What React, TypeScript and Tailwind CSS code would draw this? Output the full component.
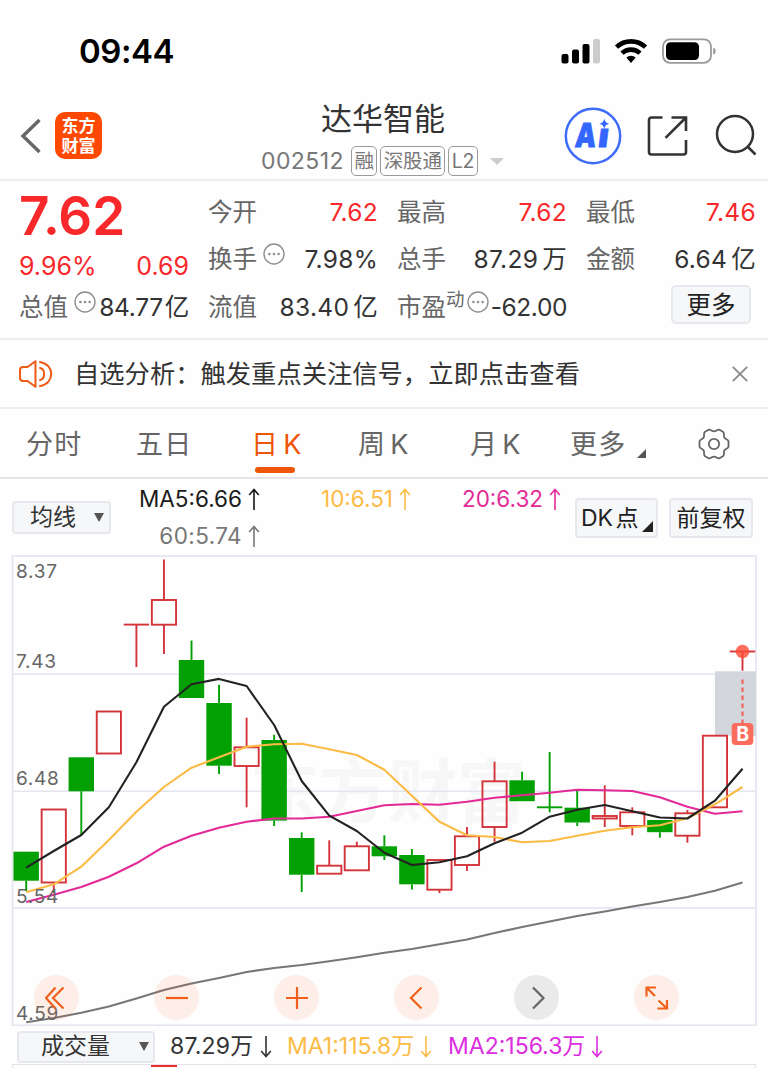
import type { ReactNode } from 'react'
import clsx from 'clsx'

type Candle = {
  up: boolean
  top: number
  bottom: number
  high?: number
  low?: number
}

const STEP = 27.55
const FIRST_X = 26.2

const candles: Candle[] = [
  { up: false, top: 851.7, bottom: 880.7, low: 891 },
  { up: true, top: 809.5, bottom: 882.5, low: 893 },
  { up: false, top: 757.3, bottom: 791.3, low: 835.3 },
  { up: true, top: 711.5, bottom: 753.5 },
  { up: true, top: 624.6, bottom: 624.6, low: 667 },
  { up: true, top: 600, bottom: 624.7, high: 559.5, low: 654 },
  { up: false, top: 660, bottom: 698, high: 640.5 },
  { up: false, top: 703, bottom: 765.7, high: 684.7, low: 774 },
  { up: true, top: 747.3, bottom: 766, high: 717.7, low: 807.3 },
  { up: false, top: 740, bottom: 820.6, high: 734.7, low: 826 },
  { up: false, top: 838, bottom: 874.7, high: 832.3, low: 892 },
  { up: true, top: 865.7, bottom: 873.7, high: 840.3 },
  { up: true, top: 846.3, bottom: 870.3, high: 841.7 },
  { up: false, top: 846.3, bottom: 856.3, high: 835.3, low: 860 },
  { up: false, top: 855, bottom: 884.3, high: 849, low: 889.5 },
  { up: true, top: 860, bottom: 889.7, low: 893 },
  { up: true, top: 836.3, bottom: 865, high: 827, low: 871 },
  { up: true, top: 781.3, bottom: 827, high: 761.7, low: 841.7 },
  { up: false, top: 780.3, bottom: 801.2, high: 771.7 },
  { up: false, top: 807.3, bottom: 807.3, high: 752, low: 812.3 },
  { up: false, top: 807.7, bottom: 822.5, high: 790.3, low: 826 },
  { up: true, top: 816, bottom: 818.5, high: 785.3, low: 827 },
  { up: true, top: 812.3, bottom: 826, high: 807.3, low: 835.3 },
  { up: false, top: 820, bottom: 832.2, low: 837.7 },
  { up: true, top: 813.3, bottom: 835.7, high: 810, low: 842.7 },
  { up: true, top: 735.7, bottom: 807.3 },
  { up: true, top: 651.5, bottom: 651.5, low: 670.7 },
]

const ma5 = [867.7, 851, 835, 807.3, 762.3, 706.7, 684.3, 678.9, 686, 725, 781, 815.7, 831, 852.7, 865, 862.3, 856.3, 843.3, 832.7, 816.7, 809.7, 805, 811.3, 817.5, 818.5, 800.7, 768.7]
const ma10 = [892.3, 884.3, 866.7, 840, 811.7, 787, 767.7, 757.3, 746.7, 744.3, 743.7, 749.3, 755, 769.7, 795.7, 821.7, 835.3, 837, 842.3, 841, 835.7, 830.7, 827.3, 825.3, 818.3, 804.3, 787]
const ma20 = [902, 894.7, 887, 876.7, 863.3, 846.7, 835.7, 827.7, 821.7, 818.5, 818.5, 816.7, 811, 805.3, 804, 804.7, 801.7, 797.7, 795.3, 792.7, 789.7, 790.3, 791, 797.3, 806.7, 813.7, 811.3]
const ma60 = [1022.3, 1018, 1012.7, 1006.5, 998.5, 990, 983.5, 978, 972, 968, 965, 961.2, 957.2, 952.8, 949, 944.2, 939.5, 933, 927, 921.5, 916, 911.5, 906.5, 902, 897, 890.7, 882.5]

const axis = [
  { value: '8.37', y: 578 },
  { value: '7.43', y: 667.5 },
  { value: '6.48', y: 785 },
  { value: '5.54', y: 902.5 },
  { value: '4.59', y: 1020 },
]

const xAt = (i: number) => FIRST_X + i * STEP

const toPoints = (values: number[]) => values.map((y, i) => `${xAt(i)},${y}`).join(' ')

function Arrow({ down }: { down?: boolean }) {
  return (
    <svg viewBox="0 0 12 23" className={clsx('h-[23px] w-3 shrink-0', down && 'rotate-180')} fill="none" stroke="currentColor" strokeWidth="1.6">
      <path d="M6 22V1.5M1.2 7 6 1.5 10.8 7" />
    </svg>
  )
}

function MoreDots() {
  return (
    <svg viewBox="0 0 22 22" className="h-[22px] w-[22px] shrink-0 text-[#8e8e8e]" fill="none" stroke="currentColor" strokeWidth="1.4">
      <circle cx="11" cy="11" r="10" />
      <g fill="currentColor" stroke="none">
        <circle cx="6.4" cy="11" r="1.3" />
        <circle cx="11" cy="11" r="1.3" />
        <circle cx="15.6" cy="11" r="1.3" />
      </g>
    </svg>
  )
}

function StatusBar() {
  return (
    <div className="flex h-[92px] items-center justify-between pt-[10px] pr-[52px] pl-[79px]">
      <span className="text-[33px] leading-none font-semibold tracking-[-0.5px] text-black">09:44</span>
      <svg viewBox="0 0 155 26" className="h-[26px] w-[155px]">
        <rect x="0.5" y="16" width="7" height="9.5" rx="2" />
        <rect x="11" y="11.5" width="7" height="14" rx="2" />
        <rect x="21.5" y="6" width="7" height="19.5" rx="2" />
        <rect x="32" y="1" width="7" height="24.5" rx="2" fill="#cccccc" />
        <g fill="none" stroke="#000" strokeWidth="4.6">
          <path d="M55.5 9.2a21 21 0 0 1 29 0" />
          <path d="M61 15.2a13 13 0 0 1 18 0" />
        </g>
        <path d="M65.3 19.6a7 7 0 0 1 9.4 0L70 25z" />
        <rect x="102" y="1.4" width="48" height="23.4" rx="7" fill="none" stroke="#9a9a9a" strokeWidth="1.8" />
        <rect x="105" y="4.2" width="33" height="17.8" rx="4.5" />
        <path d="M152.2 9.4c3.4 1.4 3.4 6 0 7.4z" fill="#9a9a9a" />
      </svg>
    </div>
  )
}

function Tag({ children }: { children: ReactNode }) {
  return (
    <span className="flex h-[30px] items-center rounded-[5px] border-[1.5px] border-[#9a9a9a] px-[2.5px] pt-px text-[19.5px] leading-none tracking-[-0.2px] text-[#777]">
      {children}
    </span>
  )
}

function Header() {
  return (
    <header className="flex h-[89px] items-start border-b-2 border-[#efefef] pr-[11px] pl-5">
      <svg viewBox="0 0 22 36" className="mt-[26px] h-9 w-[22px]" fill="none" stroke="#666" strokeWidth="3.4">
        <path d="M19.5 2 3 18l16.5 16" />
      </svg>
      <div className="mt-5 ml-[13px] flex h-[47px] w-[47px] flex-col items-center justify-center rounded-[10px] bg-[#ff4800] text-[17px] leading-[20px] font-bold text-white">
        <span>东方</span>
        <span>财富</span>
      </div>
      <div className="ml-[159px] flex w-[244px] flex-col">
        <h1 className="ml-[60px] pt-[9px] text-[31px] leading-[35px] text-[#333]">达华智能</h1>
        <div className="mt-[10px] flex h-[30px] items-center gap-[3px] text-[#777]">
          <span className="mr-[4px] w-[83px] text-[23px] leading-none tracking-[0.4px] whitespace-nowrap">002512</span>
          <Tag>融</Tag>
          <Tag>深股通</Tag>
          <Tag>L2</Tag>
          <svg viewBox="0 0 14 7" className="ml-[9px] h-[7px] w-3.5 shrink-0">
            <path d="M0 0h14L7 7z" fill="#ccc" />
          </svg>
        </div>
      </div>
      <svg viewBox="0 0 58 58" className="mt-[15px] ml-[59px] h-[58px] w-[58px] shrink-0">
        <circle cx="29" cy="29" r="27.2" fill="none" stroke="#3d6cf9" strokeWidth="2.5" />
        <g fill="#3366ff" stroke="#3366ff" strokeWidth="0.8" fontWeight="900">
          <text transform="translate(10.3 39.6) scale(0.8 1) skewX(-7)" fontSize="33">
            A
          </text>
          <text transform="translate(33.2 40.2) scale(1.05 1) skewX(-7)" fontSize="33">
            ı
          </text>
        </g>
        <path d="M40.3 11.6c.9 3.500 2 4.400 5 5.200-3 .8-4.100 1.700-5 5.200-.9-3.500-2-4.400-5-5.200 3-.8 4.100-1.700 5-5.200z" fill="#3366ff" />
      </svg>
      <svg viewBox="0 0 42 42" className="mt-[23px] ml-[25px] h-[42px] w-[42px] shrink-0" fill="none" stroke="#333" strokeWidth="2.6">
        <path d="M15.5 2.5H4.5a2.500 2.500 0 0 0-2.500 2.500v32A2.500 2.500 0 0 0 4.500 39.500h32a2.500 2.500 0 0 0 2.500-2.500V25" />
        <path d="M24.5 2.5H39V16M39 2.5 18.5 22.8" />
      </svg>
      <svg viewBox="0 0 42 42" className="mt-[22px] ml-[26px] h-[42px] w-[42px] shrink-0" fill="none" stroke="#333" strokeWidth="2.5">
        <circle cx="20" cy="20" r="18" />
        <path d="m32.5 32.5 8 8" />
      </svg>
    </header>
  )
}

type QuoteProps = {
  label: string
  value: string
  unit?: string
  red?: boolean
  info?: boolean
  tight?: boolean
}

function Quote({ label, value, unit, red, info, tight }: QuoteProps) {
  return (
    <div className="flex h-[47px] items-center text-[24.5px] leading-none whitespace-nowrap">
      <span className="text-[#666]">{label}</span>
      {info && (
        <span className="mb-3 ml-[6px]">
          <MoreDots />
        </span>
      )}
      <span className={clsx('ml-auto flex', red ? 'text-[#f8282b]' : 'text-[#333]', tight ? 'gap-0.5 tracking-[-0.3px]' : 'gap-1 tracking-[0.3px]')}>
        <span>{value}</span>
        {unit && <span>{unit}</span>}
      </span>
    </div>
  )
}

function QuotePanel() {
  return (
    <section className="grid h-[159px] grid-cols-[170px_170px_170px_170px] gap-x-[19px] border-b-2 border-[#efefef] pt-2 pl-[19px]">
      <div className="text-[#f8282b]">
        <div className="flex h-[54px] items-center text-[53px] leading-none font-semibold">7.62</div>
        <div className="flex h-10 items-center justify-between pt-1.5 text-[25px] leading-none">
          <span>9.96%</span>
          <span>0.69</span>
        </div>
        <div className="pt-px">
          <Quote label="总值" value="84.77" unit="亿" info tight />
        </div>
      </div>
      <div>
        <Quote label="今开" value="7.62" red />
        <Quote label="换手" value="7.98%" info />
        <div className="pt-px">
          <Quote label="流值" value="83.40" unit="亿" />
        </div>
      </div>
      <div>
        <Quote label="最高" value="7.62" red />
        <Quote label="总手" value="87.29" unit="万" />
        <div className="flex h-12 items-center pt-px text-[24.5px] leading-none whitespace-nowrap text-[#666]">
          市盈
          <span className="mb-4 text-[18.5px]">动</span>
          <span className="mb-3 ml-[2px]">
            <MoreDots />
          </span>
          <span className="ml-auto tracking-[-0.4px] text-[#333]">-62.00</span>
        </div>
      </div>
      <div>
        <Quote label="最低" value="7.46" red />
        <Quote label="金额" value="6.64" unit="亿" />
        <button className="mt-[2px] ml-[85px] flex h-[39px] w-20 items-center justify-center rounded-[5px] border-2 border-[#e6e8ee] bg-[#f6f7f9] pt-px text-[24.5px] leading-none text-[#222]">
          更多
        </button>
      </div>
    </section>
  )
}

function Notice() {
  return (
    <div className="flex h-[69px] items-center border-b-2 border-[#efefef] pr-5 pl-[19px]">
      <svg viewBox="0 0 34 28" className="h-7 w-[34px]" fill="none" stroke="#ee5a14" strokeWidth="2" strokeLinejoin="round">
        <path d="M16.5 1.2v25.6L8.5 21H4.2C2 21 1 20 1 18V10c0-2 1-3 3.2-3h4.3z" />
        <path d="M21 8c5.5 1 5.5 11 0 12M21 2c15 2.5 15 21.5 0 24" strokeLinecap="round" />
      </svg>
      <span className="ml-[21px] text-[25.3px] leading-none text-[#333]">自选分析：触发重点关注信号，立即点击查看</span>
      <svg viewBox="0 0 16 16" className="ml-auto h-4 w-4" stroke="#8a8a8a" strokeWidth="1.8">
        <path d="m.8.8 14.4 14.4M15.2.8.8 15.2" />
      </svg>
    </div>
  )
}

function Tabs() {
  return (
    <nav className="grid h-[70px] grid-cols-[110px_115px_107px_112px_100px_127px_60px] border-b-2 border-[#e4e4ea] pt-[2px] pl-[26px] text-[27px] leading-none tracking-[1.3px] text-[#666] [word-spacing:-5px]">
      <span className="self-center">分时</span>
      <span className="self-center">五日</span>
      <span className="flex flex-col items-start pt-[18px] text-[#ee5507]">
        <span className="leading-8">日 K</span>
        <span className="mt-[6px] ml-1 h-[6px] w-10 rounded-full bg-[#ee5507]" />
      </span>
      <span className="self-center">周 K</span>
      <span className="self-center">月 K</span>
      <span className="flex items-center">
        更多
        <svg viewBox="0 0 9 9" className="mt-[19px] ml-[10px] h-[9px] w-[9px]">
          <path d="M9 0v9H0z" fill="#555" />
        </svg>
      </span>
      <svg viewBox="0 0 32 32" className="mb-px ml-px h-8 w-8 self-center" fill="none" stroke="#666" strokeWidth="1.8" strokeLinejoin="round">
        <path d="M10.5 1.8c2-.8 3.3 1.5 5.5 1.5s3.5-2.3 5.5-1.5l3.8 2.3c1.4 1.5 0 3.6 1 5.4s3.7 2 4.2 3.8v5.4c-.5 1.8-3.2 2-4.2 3.8s.4 3.9-1 5.4l-3.8 2.3c-2 .8-3.3-1.5-5.5-1.5s-3.5 2.3-5.5 1.5l-3.8-2.3c-1.4-1.5 0-3.6-1-5.4s-3.7-2-4.2-3.8v-5.4c.5-1.8 3.2-2 4.2-3.8s-.4-3.9 1-5.4z" />
        <circle cx="16" cy="16" r="5.2" />
      </svg>
    </nav>
  )
}

function Average({ text, className }: { text: string; className: string }) {
  return (
    <span className={clsx('flex items-center justify-end gap-[6px] whitespace-nowrap', className)}>
      {text}
      <Arrow />
    </span>
  )
}

function Legend() {
  return (
    <div className="flex h-[71px] pl-3 text-[22.5px] leading-none">
      <button className="mt-[22px] flex h-[33px] w-[99px] shrink-0 items-center rounded-[4px] border-2 border-[#e6e8ee] bg-[#f6f7f9] pl-4 text-[23px] leading-none text-[#333]">
        均线
        <svg viewBox="0 0 10 9" className="ml-[18px] h-[9px] w-[10px]">
          <path d="M0 0h10L5 9z" fill="#555" />
        </svg>
      </button>
      <div className="ml-[22px] grid h-[76px] grid-cols-[127px_151px_150px] grid-rows-[37px_37px] pt-[2px]">
        <Average text="MA5:6.66" className="text-[#1a1a1a]" />
        <Average text="10:6.51" className="text-[#fcbb45]" />
        <Average text="20:6.32" className="text-[#e32a97]" />
        <Average text="60:5.74" className="tracking-[0.4px] text-[#777]" />
      </div>
      <button className="mt-[19px] ml-[14px] flex h-10 w-[83px] shrink-0 items-center rounded-[4px] border-2 border-[#e6e8ee] bg-[#f6f7f9] pl-1 text-[23px] leading-none whitespace-nowrap text-[#222] [word-spacing:-4px]">
        DK 点
        <svg viewBox="0 0 11 11" className="mt-[17px] ml-[3px] h-[11px] w-[11px] shrink-0">
          <path d="M11 0v11H0z" fill="#222" />
        </svg>
      </button>
      <button className="mt-[19px] ml-[11px] flex h-10 w-[84px] shrink-0 items-center justify-center rounded-[4px] border-2 border-[#e6e8ee] bg-[#f6f7f9] text-[23px] leading-none whitespace-nowrap text-[#222]">
        前复权
      </button>
    </div>
  )
}

function CandleShape({ candle, x }: { candle: Candle; x: number }) {
  const { up, top, bottom, high = top, low = bottom } = candle
  const color = up ? '#d3343a' : '#02a002'

  return (
    <g stroke={color} strokeWidth="1.9" fill={up ? 'none' : color}>
      {high < top && <path d={`M${x} ${high}V${top}`} />}
      {low > bottom && <path d={`M${x} ${bottom}V${low}`} />}
      {top === bottom ? (
        <path d={`M${x - 12.7} ${top}h25.4`} />
      ) : up ? (
        <rect x={x - 12.1} y={top} width="24.2" height={bottom - top} />
      ) : (
        <rect x={x - 12.7} y={top} width="25.4" height={bottom - top} stroke="none" />
      )}
    </g>
  )
}

function RoundButton({ gray, children }: { gray?: boolean; children: ReactNode }) {
  return (
    <button className={clsx('flex h-[45px] w-[45px] items-center justify-center rounded-full', gray ? 'bg-black/8 text-[#666]' : 'bg-[#f26522]/10 text-[#f0601a]')}>
      <svg viewBox="0 0 24 24" className="h-6 w-6" fill="none" stroke="currentColor" strokeWidth="2.2">
        {children}
      </svg>
    </button>
  )
}

function Chart() {
  return (
    <div className="relative h-[476px]">
      <svg viewBox="0 550 768 476" className="block h-[476px] w-[768px]">
        <text x="250" y="817" fontSize="69" fontWeight="700" fill="#f7f7f7">
          东方财富
        </text>
        <g stroke="#e4e5ee" strokeWidth="1.6" fill="none">
          <path d="M12.5 674H756M12.5 791.2H756M12.5 908H756" />
          <rect x="12.5" y="556" width="743.5" height="469.2" />
        </g>
        <rect x="715" y="671.3" width="41" height="64.4" fill="#d3d6dc" />
        {candles.map((candle, i) => (
          <CandleShape key={i} candle={candle} x={xAt(i)} />
        ))}
        <g fill="none" strokeWidth="2.1" strokeLinejoin="round">
          <polyline points={toPoints(ma60)} stroke="#777" />
          <polyline points={toPoints(ma20)} stroke="#e32a97" />
          <polyline points={toPoints(ma10)} stroke="#fcbb45" />
          <polyline points={toPoints(ma5)} stroke="#222" />
        </g>
        <g fontSize="19" fill="#666" letterSpacing="0.7">
          {axis.map((tick) => (
            <text key={tick.value} x="16" y={tick.y}>
              {tick.value}
            </text>
          ))}
        </g>
        <circle cx="742.5" cy="651.5" r="6.8" fill="#ff4a35" fillOpacity="0.8" />
        <path d="M742.5 679.5V723" stroke="#f4594c" strokeWidth="2" strokeDasharray="4.5 3.5" />
        <rect x="731.7" y="723" width="21.6" height="22" rx="4" fill="#fb6c5d" />
        <text x="742.6" y="741" fontSize="19.5" fontWeight="700" fill="#fff" textAnchor="middle">
          B
        </text>
      </svg>
      <div className="absolute right-[89px] bottom-[6px] left-[34px] flex justify-between">
        <RoundButton>
          <path d="M10.5 1.5 1 12l9.500 10.500M18.500 1.500 8 12l10.500 10.500" />
        </RoundButton>
        <RoundButton>
          <path d="M1 12h22" />
        </RoundButton>
        <RoundButton>
          <path d="M1 12h22M12 1v22" />
        </RoundButton>
        <RoundButton>
          <path d="M16.5 1.5 6 12l10.5 10.5" />
        </RoundButton>
        <RoundButton gray>
          <path d="M8 1.5 18.5 12 8 22.5" />
        </RoundButton>
        <RoundButton>
          <path d="M1.5 10.5V1.5H11M1.5 1.5l8.5 8.500M22 14v8.500h-9.500M22 22.500 13.500 14.500" />
        </RoundButton>
      </div>
    </div>
  )
}

function VolumeBar() {
  return (
    <>
      <div className="flex h-[38px] items-center pt-1 pb-px pl-[17px] text-[23px] leading-none whitespace-nowrap">
        <button className="flex h-8 w-[138px] shrink-0 items-center rounded-[4px] border-2 border-[#e6e8ee] bg-[#f6f7f9] pl-[22px] text-[23px] leading-none text-[#333]">
          成交量
          <svg viewBox="0 0 10 9" className="ml-[29px] h-[9px] w-[10px]">
            <path d="M0 0h10L5 9z" fill="#555" />
          </svg>
        </button>
        <span className="ml-[15px] flex w-[117px] items-center gap-[6px] tracking-[0.2px] text-[#333]">
          87.29万
          <Arrow down />
        </span>
        <span className="flex w-[161px] items-center gap-[6px] text-[#fcbb45]">
          MA1:115.8万
          <Arrow down />
        </span>
        <span className="flex items-center gap-[6px] text-[#dc2ee0]">
          MA2:156.3万
          <Arrow down />
        </span>
      </div>
      <div className="mx-3 h-1 border-x border-t border-[#e4e4ea]">
        <div className="ml-[138px] h-[2px] w-[26px] bg-[#ee2c2c]" />
      </div>
    </>
  )
}

export default function App() {
  return (
    <div className="h-[1068px] w-[768px] overflow-hidden bg-[#fefefe] font-['Inter','Noto_Sans_CJK_SC',sans-serif]">
      <StatusBar />
      <Header />
      <QuotePanel />
      <Notice />
      <Tabs />
      <Legend />
      <Chart />
      <VolumeBar />
    </div>
  )
}
